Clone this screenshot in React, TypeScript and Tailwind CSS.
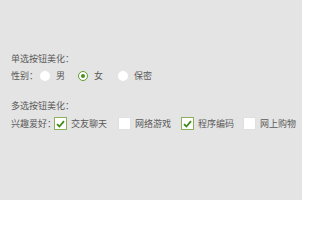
import React from "react";

const font = { fontFamily: '"Noto Sans CJK SC", "Noto Sans", sans-serif' };

function Radio({ checked, label }: { checked?: boolean; label: string }) {
  return (
    <div className="flex items-center whitespace-nowrap">
      <span
        className={
          "w-[10px] h-[10px] rounded-full bg-white flex items-center justify-center shrink-0 " +
          (checked ? "border border-[#5f9a2c]" : "")
        }
      >
        {checked && <span className="w-[4px] h-[4px] rounded-full bg-[#4a8f1f]" />}
      </span>
      <span className="ml-[6px]">{label}</span>
    </div>
  );
}

function Check({ checked, label }: { checked?: boolean; label: string }) {
  return (
    <div className="flex items-center whitespace-nowrap">
      <span
        className={
          "w-[13px] h-[13px] bg-white flex items-center justify-center shrink-0 " +
          (checked ? "border border-[#8cb05a]" : "border border-[#e0e0e0]")
        }
      >
        {checked && (
          <svg width="9" height="8" viewBox="0 0 9 8">
            <path d="M1 4.2 L3.4 6.5 L8 1.2" stroke="#3f8a1a" strokeWidth="1.8" fill="none" />
          </svg>
        )}
      </span>
      <span className="ml-[4px]">{label}</span>
    </div>
  );
}

export default function App() {
  return (
    <div
      className="w-[302px] h-[200px] bg-[#e4e4e4] text-[#5a5a5a] text-[9px] leading-[10px] pl-[11px] pt-[54px] whitespace-nowrap"
      style={font}
    >
      <div>单选按钮美化：</div>
      <div className="flex items-center mt-[7px]">
        <span className="w-[29px] shrink-0">性别：</span>
        <div className="w-[38px] shrink-0"><Radio label="男" /></div>
        <div className="w-[40px] shrink-0"><Radio checked label="女" /></div>
        <Radio label="保密" />
      </div>
      <div className="mt-[20px]">多选按钮美化：</div>
      <div className="flex items-center mt-[6px]">
        <span className="w-[43px] shrink-0">兴趣爱好：</span>
        <div className="w-[64px] shrink-0"><Check checked label="交友聊天" /></div>
        <div className="w-[63px] shrink-0"><Check label="网络游戏" /></div>
        <div className="w-[62px] shrink-0"><Check checked label="程序编码" /></div>
        <Check label="网上购物" />
      </div>
    </div>
  );
}
